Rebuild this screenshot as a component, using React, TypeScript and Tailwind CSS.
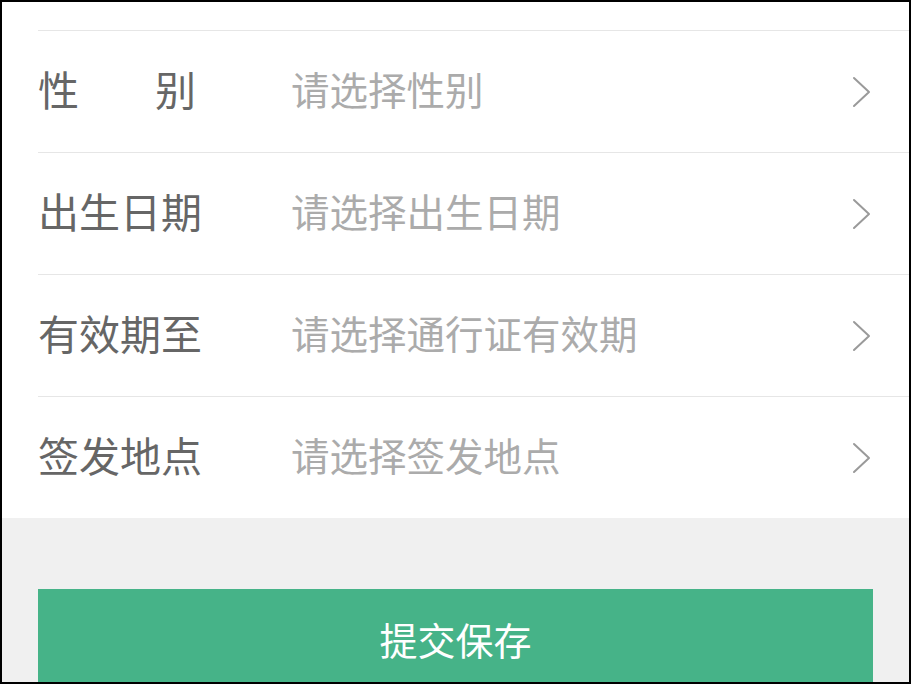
const rows = [
  { label: ["性", "别"], placeholder: "请选择性别" },
  { label: ["出生日期"], placeholder: "请选择出生日期" },
  { label: ["有效期至"], placeholder: "请选择通行证有效期" },
  { label: ["签发地点"], placeholder: "请选择签发地点" },
];

function Chevron() {
  return (
    <svg width="19" height="32" viewBox="0 0 19 32" fill="none" className="shrink-0">
      <polyline points="2,2 17,16 2,30" stroke="#9a9a9a" strokeWidth="2" strokeLinecap="round" strokeLinejoin="round" />
    </svg>
  );
}

export default function App() {
  return (
    <div
      className="h-[684px] w-[911px] overflow-hidden border-2 border-black bg-[#f0f0f0]"
      style={{ fontFamily: '"Noto Sans CJK SC", "Noto Sans", sans-serif' }}
    >
      <div className="bg-white pt-[28px]">
        {rows.map((r) => (
          <div key={r.placeholder} className="ml-[36px] flex h-[122px] items-center border-t border-[#e6e6e6] pr-[38px]">
            <div className="w-[253px] shrink-0 whitespace-nowrap pb-[6px] text-[41px] leading-none text-[#666666]">
              {r.label.length > 1 ? (
                <div className="flex w-[158px] justify-between">
                  {r.label.map((t) => (
                    <span key={t}>{t}</span>
                  ))}
                </div>
              ) : (
                r.label[0]
              )}
            </div>
            <div className="flex-1 pb-[6px] text-[38.5px] leading-none text-[#ababab]">{r.placeholder}</div>
            <Chevron />
          </div>
        ))}
      </div>
      <div className="px-[36px] pt-[71px]">
        <button className="flex h-[104px] w-full items-center justify-center bg-[#46b388] pb-[4px] text-[38px] leading-none text-white">
          提交保存
        </button>
      </div>
    </div>
  );
}
